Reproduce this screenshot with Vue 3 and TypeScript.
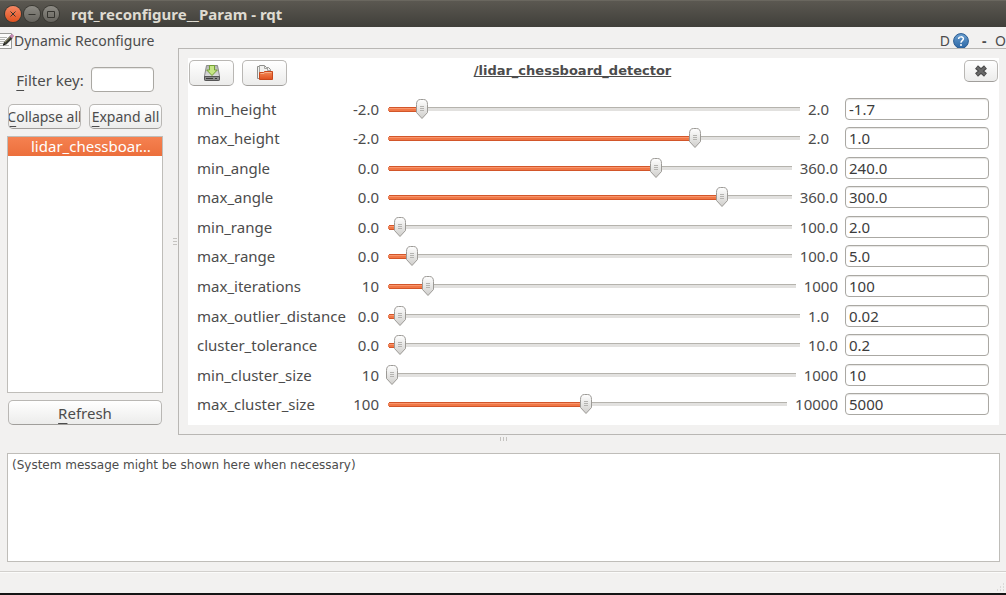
<script setup lang="ts">
import { reactive, ref } from 'vue'

interface Param {
  name: string
  min: string
  max: string
  value: string
}

const params = reactive<Param[]>([
  { name: 'min_height', min: '-2.0', max: '2.0', value: '-1.7' },
  { name: 'max_height', min: '-2.0', max: '2.0', value: '1.0' },
  { name: 'min_angle', min: '0.0', max: '360.0', value: '240.0' },
  { name: 'max_angle', min: '0.0', max: '360.0', value: '300.0' },
  { name: 'min_range', min: '0.0', max: '100.0', value: '2.0' },
  { name: 'max_range', min: '0.0', max: '100.0', value: '5.0' },
  { name: 'max_iterations', min: '10', max: '1000', value: '100' },
  { name: 'max_outlier_distance', min: '0.0', max: '1.0', value: '0.02' },
  { name: 'cluster_tolerance', min: '0.0', max: '10.0', value: '0.2' },
  { name: 'min_cluster_size', min: '10', max: '1000', value: '10' },
  { name: 'max_cluster_size', min: '100', max: '10000', value: '5000' },
])

const filterKey = ref('')

function fraction(p: Param): number {
  const min = Number(p.min)
  const max = Number(p.max)
  return (Number(p.value) - min) / (max - min)
}

function onSlide(p: Param, event: Event) {
  const raw = Number((event.target as HTMLInputElement).value)
  p.value = p.min.includes('.') ? raw.toFixed(2) : String(Math.round(raw))
}
</script>

<template>
  <div class="window">
    <header class="titlebar">
      <button class="win-btn close" aria-label="Close window">
        <svg viewBox="0 0 16 16" width="16" height="16"><path d="M5.5 5.5l5 5M10.5 5.5l-5 5" /></svg>
      </button>
      <button class="win-btn" aria-label="Minimize window">
        <svg viewBox="0 0 16 16" width="16" height="16"><path d="M4.5 8.5h7" /></svg>
      </button>
      <button class="win-btn" aria-label="Maximize window">
        <svg viewBox="0 0 16 16" width="16" height="16"><path d="M4.5 5.5h7v6h-7z" /></svg>
      </button>
      <h1>rqt_reconfigure__Param - rqt</h1>
    </header>

    <div class="dock-title">
      <svg class="edit-icon" viewBox="0 0 14 16" width="14" height="16">
        <path d="M-2 .5H11.5V15.5H-2z" fill="#fbfbfa" stroke="#9b9b98" />
        <path d="M0 4.5h7M0 6.5h5M0 8.5h4M0 10.5h3M0 12.5h9" stroke="#b4b5b2" />
        <path d="M3 12.5l1-3.5 6-6 2.5 2.5-6.2 6z" fill="#34362f" />
        <path d="M4.8 9.4l5.6-5.4" stroke="#a9a478" />
        <path d="M3 12.5l.7-2.2 1.6 1.4z" fill="#111" />
        <path d="M9.8 3.2l1.6-1.6c1.2-.6 2.6.8 2 2l-1.4 1.6z" fill="#c98bb5" stroke="#9d6a90" stroke-width=".5" />
      </svg>
      <h2>Dynamic Reconfigure</h2>
      <button class="plain">D</button>
      <button class="plain help" aria-label="Help">
        <svg viewBox="0 0 16 16" width="16" height="16">
          <defs>
            <linearGradient id="helpFill" x1="0" y1="0" x2="0" y2="1">
              <stop offset="0" stop-color="#6a9fd0" />
              <stop offset="1" stop-color="#2c66a4" />
            </linearGradient>
          </defs>
          <circle cx="8" cy="8" r="7.4" fill="url(#helpFill)" stroke="#2b5c92" />
          <path d="M5.6 6C5.6 3.2 10.5 3.2 10.4 5.8c0 1.9-2.4 1.9-2.4 3.9" fill="none" stroke="#fff" stroke-width="1.5" />
          <circle cx="8" cy="12" r="1" fill="#fff" />
        </svg>
      </button>
      <button class="plain dash" aria-label="Hide"><span>-</span></button>
      <button class="plain last">O</button>
    </div>

    <main class="body">
      <aside class="side">
        <div class="filter">
          <label for="filter"><u>F</u>ilter key:</label>
          <input id="filter" v-model="filterKey" type="text" class="field" />
        </div>
        <div class="pair">
          <button class="btn"><span><u>C</u>ollapse all</span></button>
          <button class="btn"><span><u>E</u>xpand all</span></button>
        </div>
        <ul class="tree">
          <li>lidar_chessboar…</li>
        </ul>
        <button class="btn"><span><u>R</u>efresh</span></button>
      </aside>

      <div class="grip-v"><i></i><i></i><i></i></div>

      <section class="frame">
        <div class="panel">
          <div class="toolbar">
            <button class="btn tool" aria-label="Save parameters">
              <svg viewBox="0 0 16 16" width="16" height="16">
                <defs>
                  <linearGradient id="diskTop" x1="0" y1="0" x2="0" y2="1">
                    <stop offset="0" stop-color="#b4b4b4" />
                    <stop offset="1" stop-color="#ececec" />
                  </linearGradient>
                </defs>
                <path d="M2.5.5h11l2 10.5v3.500q0 1-1 1h-13q-1 0-1-1V11z" fill="url(#diskTop)" stroke="#8a8a8a" />
                <path d="M.5 11.5h15v3q0 1-1 1h-13q-1 0-1-1z" fill="#8c8c8c" stroke="#555" />
                <path d="M2 13.5h7M11 13.5h2" stroke="#3a3a3a" />
                <path d="M5.5.5h5v4.5h2.8L8 10.5 2.700 5h2.800z" fill="#c5e584" stroke="#73a033" />
              </svg>
            </button>
            <button class="btn tool" aria-label="Load parameters">
              <svg viewBox="0 0 16 16" width="16" height="16">
                <defs>
                  <linearGradient id="folderFill" x1="0" y1="0" x2="0" y2="1">
                    <stop offset="0" stop-color="#f48c58" />
                    <stop offset="1" stop-color="#e0501f" />
                  </linearGradient>
                </defs>
                <path d="M.5 13.5V1.5h2V.5h5l2 2h2l2 2v9z" fill="#f1f1ef" stroke="#8e8e8b" />
                <path d="M2.5 1.5v10M7.5.5v3h2.500M10.5 2.500v3h3" fill="none" stroke="#a5a5a2" />
                <path d="M2.5 14.5V7.5h4l1-1h8v8z" fill="url(#folderFill)" stroke="#c8481c" />
                <path d="M3.5 8.5h3.500l1-1h6.500" fill="none" stroke="#f8b08a" />
              </svg>
            </button>
            <h3>/lidar_chessboard_detector</h3>
            <button class="btn shut" aria-label="Close node">
              <svg viewBox="0 0 14 14" width="14" height="14">
                <path d="M2.5 3l9 8M11.5 3l-9 8" stroke="#4a4a4a" stroke-width="4.4" />
                <path d="M3 3.4l8 7.2M11 3.4l-8 7.2" stroke="#696969" stroke-width="2.2" />
              </svg>
            </button>
          </div>

          <form class="params" @submit.prevent>
            <div v-for="p in params" :key="p.name" class="row">
              <label :for="p.name">{{ p.name }}</label>
              <span class="min">{{ p.min }}</span>
              <input
                type="range"
                class="slider"
                step="any"
                :min="p.min"
                :max="p.max"
                :value="p.value"
                :aria-label="p.name"
                :style="{ '--pos': fraction(p) }"
                @input="onSlide(p, $event)"
              />
              <span class="max">{{ p.max }}</span>
              <input :id="p.name" v-model="p.value" type="text" class="field" />
            </div>
          </form>
        </div>
      </section>
    </main>

    <div class="grip-h"><i></i><i></i><i></i></div>

    <div class="message">(System message might be shown here when necessary)</div>

    <footer class="status">
      <svg viewBox="0 0 10 10" width="10" height="10">
        <path d="M7 1h1M4 4h1M7 4h1M1 7h1M4 7h1M7 7h1" stroke="#c4c2bf" stroke-width="1" />
      </svg>
    </footer>
  </div>
</template>

<style>
body {
  margin: 0;
  background: #f2f1f0;
}
</style>

<style scoped>
* {
  box-sizing: border-box;
}

.window {
  display: flex;
  flex-direction: column;
  min-height: 100vh;
  overflow: hidden;
  background: #f2f1f0;
  border-bottom: 2px solid #151515;
  color: #4c4c4c;
  font: 15px/20px "Noto Sans", "Open Sans", sans-serif;
}

button,
input {
  margin: 0;
  font: inherit;
  color: inherit;
}

h1,
h2,
h3 {
  margin: 0;
  font: inherit;
}

u {
  text-decoration: underline;
  text-underline-offset: 4px;
  text-decoration-thickness: 1px;
}

.titlebar {
  display: flex;
  align-items: center;
  gap: 3px;
  height: 27px;
  padding-left: 5px;
  background: linear-gradient(#5b5851, #403f3a);
  border-top: 1px solid #6a675f;
}

.titlebar h1 {
  padding-left: 9px;
  color: #dfdbd2;
  font-weight: 700;
}

.win-btn {
  display: flex;
  width: 16px;
  height: 16px;
  padding: 0;
  border: 0;
  border-radius: 50%;
  background: linear-gradient(#8d8b84, #66645e);
  box-shadow: 0 0 0 1px #393832;
}

.win-btn path {
  fill: none;
  stroke: #35342f;
  stroke-width: 1;
}

.win-btn.close {
  background: linear-gradient(#f58763, #e2521f);
}

.dock-title {
  display: flex;
  align-items: center;
  height: 21px;
  padding-top: 6px;
  font-size: 14px;
  white-space: nowrap;
}

.dock-title h2 {
  flex: 1;
}

.plain {
  display: flex;
  padding: 0;
  border: 0;
  background: none;
}

.help {
  margin: 0 13px 0 3px;
}

.dash {
  width: 13px;
  font-weight: 700;
}

.last {
  width: 11px;
  overflow: hidden;
}

.body {
  display: flex;
  flex: 1;
}

.side {
  display: flex;
  flex-direction: column;
  width: 163px;
  padding: 19px 0 10px 7px;
}

.filter {
  display: flex;
  align-items: center;
  justify-content: center;
  gap: 7px;
}

.filter .field {
  width: 63px;
  height: 25px;
}

.field {
  min-width: 0;
  height: 22px;
  padding: 0 3px;
  border: 1px solid #aaa8a3;
  border-radius: 4px;
  background: #fff;
  box-shadow: inset 0 1px 1px #e6e5e3;
  color: #3c3c3c;
  outline: 0;
}

.pair {
  display: grid;
  grid-template-columns: 1fr 1fr;
  gap: 6px;
  padding: 12px 0 7px;
  font-size: 14px;
}

.btn {
  display: flex;
  flex-shrink: 0;
  align-items: center;
  justify-content: center;
  height: 25px;
  margin: 0 1px;
  padding: 0;
  overflow: hidden;
  border: 1px solid #b9b7b4;
  border-bottom-color: #a09e9b;
  border-radius: 5px;
  background: linear-gradient(#ffffff, #ececeb);
  white-space: nowrap;
}

.tree {
  flex: 1;
  margin: 0 0 7px;
  padding: 0;
  border: 1px solid #bfbdb9;
  background: #fff;
  list-style: none;
}

.tree li {
  height: 19px;
  padding-left: 23px;
  background: linear-gradient(#f58150, #ec6f3c);
  color: #fff;
  line-height: 19px;
}

.grip-v {
  display: flex;
  flex-direction: column;
  align-items: center;
  justify-content: center;
  gap: 2px;
  width: 15px;
  padding-left: 9px;
}

.grip-v i {
  width: 4px;
  height: 1px;
  background: #c5c3c0;
}

.frame {
  display: flex;
  flex: 1;
  padding: 9px 7px 9px 9px;
  border: 1px solid #b9b7b4;
  border-right: 0;
}

.panel {
  display: flex;
  flex: 1;
  flex-direction: column;
  background: #fff;
}

.toolbar {
  display: flex;
  align-items: flex-start;
  padding-top: 2px;
}

.tool {
  width: 45px;
  height: 26px;
  margin-right: 7px;
}

.toolbar h3 {
  flex: 1;
  padding-right: 112px;
  font: 700 13px/22px "DejaVu Sans", sans-serif;
  text-align: center;
  text-decoration: underline;
  text-decoration-skip-ink: none;
  text-decoration-thickness: 1px;
}

.shut {
  width: 34px;
  height: 22px;
}

.params {
  display: grid;
  flex: 1;
  grid-auto-rows: 1fr;
  padding: 8px 10px 6px 9px;
}

.row {
  display: grid;
  grid-template-columns: 146px 36px 1fr auto 144px;
  align-items: center;
}

.min {
  text-align: right;
}

.max {
  min-width: 30px;
  margin: 0 7px 0 6px;
}

.slider {
  width: auto;
  min-width: 0;
  height: 22px;
  margin-left: 7px;
  appearance: none;
  background: none;
}

.slider::-webkit-slider-runnable-track {
  height: 22px;
  background:
    linear-gradient(#e58059, #e58059) 2px 10px / 1px 3px no-repeat,
    linear-gradient(#d2562a 0 1px, #f9966d 1px 2px, #f07746 2px 4px, #d2562a 4px) 3px 9px / calc((100% - 12px) * var(--pos)) 5px no-repeat,
    linear-gradient(#b5b3ad 0 1px, #e2e1df 1px) 3px 9px / calc(100% - 5px) 4px no-repeat;
}

.slider::-webkit-slider-thumb {
  width: 12px;
  height: 20px;
  margin-top: 1px;
  appearance: none;
  background: url("data:image/svg+xml,%3Csvg xmlns='http://www.w3.org/2000/svg' viewBox='0 0 12 20'%3E%3ClinearGradient id='g' x2='0' y2='1'%3E%3Cstop stop-color='%23fff'/%3E%3Cstop offset='1' stop-color='%23cfcecb'/%3E%3C/linearGradient%3E%3Cpath d='M.5 5.5Q.5.5 4.5.5h3Q11.5.5 11.5 5.5V13.5L6 19.5.5 13.5z' fill='url(%23g)' stroke='%239c9a96'/%3E%3Cpath d='M4 7.5h4M4 9.5h4M4 11.5h4' stroke='%23b4b3b0'/%3E%3C/svg%3E");
}

.grip-h {
  display: flex;
  align-items: flex-start;
  justify-content: center;
  gap: 2px;
  height: 18px;
  padding-top: 2px;
}

.grip-h i {
  width: 1px;
  height: 4px;
  background: #c5c3c0;
}

.message {
  min-height: 109px;
  margin: 0 6px 9px 7px;
  padding: 1px 4px;
  border: 1px solid #bfbdb9;
  background: #fff;
  font: 12px/20px "DejaVu Sans", sans-serif;
}

.status {
  display: flex;
  align-items: flex-end;
  justify-content: flex-end;
  height: 22px;
  border-top: 1px solid #d2d0cd;
  box-shadow: inset 0 1px #fbfbfa;
}
</style>
